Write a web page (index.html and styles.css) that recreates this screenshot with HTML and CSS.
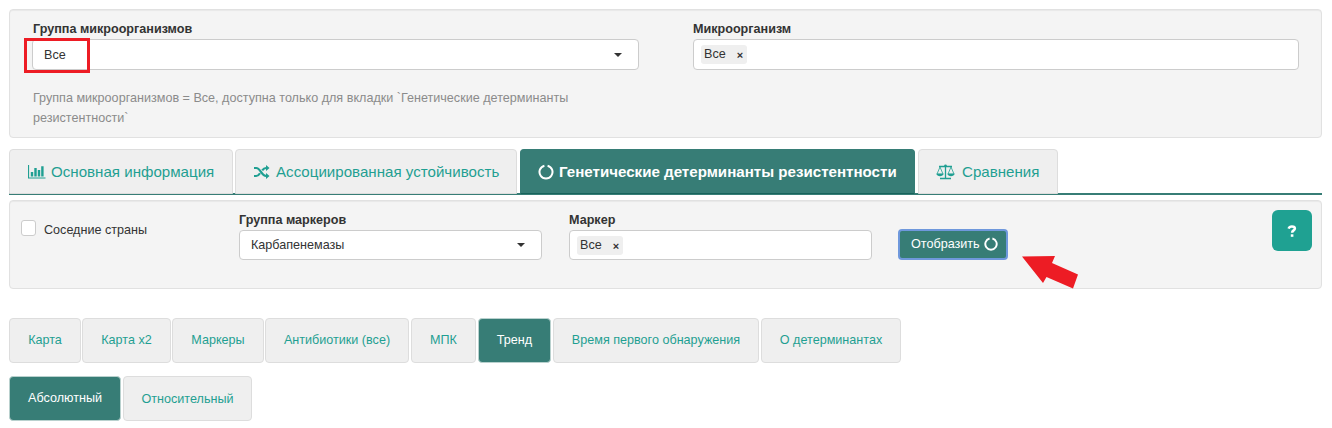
FILE: index.html
```html
<!DOCTYPE html>
<html lang="ru">
<head>
<meta charset="utf-8">
<title>Генетические детерминанты резистентности</title>
<link rel="stylesheet" href="styles.css">
</head>
<body>
<section class="panel filters">
  <div class="field group">
    <label class="label">Группа микроорганизмов</label>
    <div class="control select"><span>Все</span><i class="caret"></i><span class="highlight"></span></div>
    <p class="hint">Группа микроорганизмов = Все, доступна только для вкладки `Генетические детерминанты<br>резистентности`</p>
  </div>
  <div class="field organism">
    <label class="label">Микроорганизм</label>
    <div class="control multi"><span class="chip">Все<b>×</b></span></div>
  </div>
</section>

<nav class="tabs">
  <a class="tab info"><svg width="18" height="14" viewBox="0 0 18 14"><path d="M.5 0V13H17.500" fill="none" stroke="currentColor" stroke-width="1.200"/><path d="M2.800 7h2.400v4.500H2.800zM6.300 3h2.400v8.500H6.300zM9.800 5h2.400v6.500H9.800zM13.200 1.200h2.400v10.300h-2.400z" fill="currentColor"/></svg><span>Основная информация</span></a>
  <a class="tab assoc"><svg width="16" height="14" viewBox="0 0 16 14"><path d="M0 3h2.200C6.500 3 7.500 11 12 11h1M0 11h2.200c1.900 0 2.900-1.300 3.800-2.800M8.200 5.400C9.200 4 10.200 3 12 3h1" fill="none" stroke="currentColor" stroke-width="2.200"/><path d="M12 0L15.500 3L12 6zM12 8l3.500 3l-3.500 3z" fill="currentColor"/></svg><span>Ассоциированная устойчивость</span></a>
  <a class="tab genes active"><svg width="16" height="16" viewBox="0 0 16 16"><path d="M9.600 1.700a6.500 6.500 0 1 1-3.200 0" fill="none" stroke="currentColor" stroke-width="2"/></svg><span>Генетические детерминанты резистентности</span></a>
  <a class="tab compare"><svg width="19" height="16" viewBox="0 0 19 16"><path d="M3 2.500h13M9.500 1v13M4 14.500h11" fill="none" stroke="currentColor" stroke-width="1.300"/><circle cx="9.500" cy="1.800" r="1.300" fill="currentColor"/><path d="M4 3L1 10h6zM15 3l-3 7h6z" fill="none" stroke="currentColor" stroke-width=".8"/><path d="M.3 9.800h7.400C7.200 13 .8 13 .3 9.800zM11.300 9.800h7.400c-.5 3.200-6.900 3.200-7.400 0z" fill="currentColor"/></svg><span>Сравнения</span></a>
</nav>

<section class="panel markers">
  <label class="check"><i class="box"></i><span>Соседние страны</span></label>
  <div class="field marker-group">
    <label class="label">Группа маркеров</label>
    <div class="control select"><span>Карбапенемазы</span><i class="caret"></i></div>
  </div>
  <div class="field marker">
    <label class="label">Маркер</label>
    <div class="control multi"><span class="chip">Все<b>×</b></span></div>
  </div>
  <button class="submit"><span>Отобразить</span><svg width="14" height="14" viewBox="0 0 16 16"><path d="M9.600 1.700a6.500 6.500 0 1 1-3.200 0" fill="none" stroke="currentColor" stroke-width="2.200"/></svg></button>
  <button class="help" aria-label="Справка"><svg width="10" height="12" viewBox="0 0 10 12"><path d="M1.600 3.700C2.100 2.200 3.200 1.400 4.900 1.400c1.900 0 3 .8 3 2.100 0 1.900-2.800 1.900-2.800 4.200" fill="none" stroke="currentColor" stroke-width="2.500"/><path d="M3.800 9.300h2.600v2.500H3.800z" fill="currentColor"/></svg></button>
  <svg class="arrow" width="58" height="34" viewBox="0 0 58 34"><path d="M0 .5L33 0L30 7L56 18.500L51 32.500L24.500 21L21 27Z" fill="#ed1c24"/></svg>
</section>

<nav class="pills">
  <a class="pill w-map">Карта</a><a class="pill w-map2">Карта x2</a><a class="pill w-markers">Маркеры</a><a class="pill w-anti">Антибиотики (все)</a><a class="pill w-mic">МПК</a><a class="pill w-trend active">Тренд</a><a class="pill w-time">Время первого обнаружения</a><a class="pill w-about">О детерминантах</a>
</nav>
<nav class="pills second">
  <a class="pill w-abs active">Абсолютный</a><a class="pill w-rel">Относительный</a>
</nav>
</body>
</html>
```
FILE: styles.css
```css
* { box-sizing: border-box; }
body {
  margin: 0;
  padding: 9px 10px 0 9px;
  height: 428px;
  overflow: hidden;
  background: #fff;
  color: #333;
  font: 12.6px/20px "Liberation Sans", Arial, sans-serif;
}
.panel {
  display: flex;
  background: #f4f4f4;
  border: 1px solid #e1e1e1;
  border-radius: 4px;
  box-shadow: inset 0 1px 1px rgba(0, 0, 0, .05);
}
.filters { height: 129px; padding: 9px 22px 0; gap: 54px; }
.group { width: 607px; }
.organism { width: 606px; }
.label { display: block; height: 20px; padding-left: 1px; font-weight: bold; white-space: nowrap; }
.organism .label, .markers .label { padding-left: 0; }
.control {
  position: relative;
  display: flex;
  align-items: center;
  background: #fff;
  border: 1px solid #ccc;
  border-radius: 4px;
  height: 31px;
}
.select { justify-content: space-between; padding: 0 16px 0 11px; }
.multi { padding-left: 7px; }
.caret { border: 4px solid transparent; border-top-color: #333; border-bottom: 0; border-left-width: 4.500px; border-right-width: 4.500px; }
.highlight { position: absolute; left: -9px; top: -2px; width: 66px; height: 35px; border: 3px solid #ed1c24; }
.chip { display: flex; width: 46px; height: 19px; line-height: 19px; padding-left: 3px; border-radius: 3px; background: #efefef; }
.chip b { margin-left: 11px; font-size: 11px; line-height: 20px; }
.hint { margin: 18px 0 0; padding-left: 1px; color: #8b8b8b; white-space: nowrap; }

.tabs { display: flex; height: 46px; margin-top: 11px; border-bottom: 2px solid #377d76; }
.tab {
  display: flex;
  align-items: center;
  height: 45px;
  padding-left: 18px;
  border: 1px solid #ddd;
  border-radius: 4px 4px 0 0;
  background: #efefef;
  color: #1f9f92;
  font-size: 15.12px;
  white-space: nowrap;
}
.tab svg { flex: none; }
.info { width: 224px; gap: 5px; margin-right: 2px; }
.assoc { width: 282px; gap: 6px; margin-right: 3px; }
.genes { width: 395px; gap: 5px; margin-right: 3px; padding-left: 17px; }
.compare { width: 140px; gap: 7px; padding-left: 17px; }
.tab.active { background: #377d76; border-color: #377d76; border-bottom-color: #17635b; color: #fff; font-weight: bold; }

.markers { position: relative; height: 89px; margin-top: 5px; padding: 9px 9px 0 11px; }
.markers .control { height: 30px; }
.check { display: flex; width: 218px; gap: 8px; padding-top: 10px; }
.box { width: 15px; height: 16px; background: #fff; border: 1px solid #ccc; border-radius: 3px; }
.marker-group { width: 303px; margin-right: 27px; }
.marker { width: 303px; margin-right: 26px; }
.submit {
  display: flex;
  align-items: center;
  gap: 4px;
  width: 110px;
  height: 31px;
  margin-top: 19px;
  padding: 0 0 2px 11px;
  border: 2px solid #6f98dc;
  border-radius: 4px;
  background: #377d76;
  color: #fff;
  font: inherit;
}
.help {
  display: flex;
  align-items: center;
  justify-content: center;
  width: 40px;
  height: 41px;
  margin-left: auto;
  padding: 0;
  border: 0;
  border-radius: 6px;
  background: #1fa192;
  color: #fff;
}
.arrow { position: absolute; left: 1012px; top: 55px; }

.pills { display: flex; height: 45px; margin-top: 29px; }
.second { margin-top: 13px; }
.pill {
  display: flex;
  align-items: center;
  justify-content: center;
  height: 45px;
  margin-right: 2px;
  padding-bottom: 2px;
  border: 1px solid #ddd;
  border-radius: 4px;
  background: #efefef;
  color: #1f9f92;
  white-space: nowrap;
}
.pill.active { background: #377d76; color: #fff; border-color: #b9d1ce; }
.w-map { width: 72px; margin-right: 1px; }
.w-map2 { width: 89px; margin-right: 1px; }
.w-markers { width: 92px; margin-right: 1px; }
.w-anti { width: 144px; }
.w-mic { width: 65px; }
.w-trend { width: 73px; }
.w-time { width: 206px; }
.w-about { width: 140px; }
.w-abs { width: 112px; }
.w-rel { width: 129px; padding-bottom: 0; }
```
